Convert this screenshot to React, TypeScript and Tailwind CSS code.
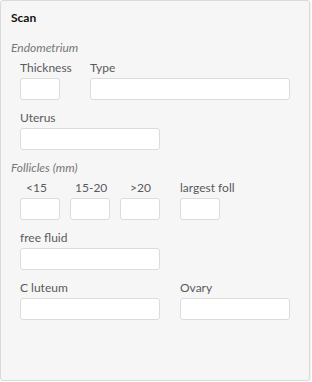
const font = { fontFamily: "Lato, 'Open Sans', sans-serif" };

function Field({ label, w, indent = "" }: { label: string; w: string; indent?: string }) {
  return (
    <div className={`flex shrink-0 flex-col ${w}`}>
      <span className={`h-4 text-[12px] leading-4 text-[#5a5a5a] whitespace-nowrap ${indent}`}>{label}</span>
      <div className="mt-[2px] h-[22px] w-full rounded-[3px] border border-[#dcdcdc] bg-white" />
    </div>
  );
}

export default function App() {
  return (
    <div className="bg-white p-0" style={font}>
      <div className="h-[381px] w-[310px] rounded-[3px] border border-[#dadada] bg-[#f6f6f6] px-[10px] pt-[9px] shadow-[1px_1px_1px_rgba(0,0,0,0.06)]">
        <h2 className="h-4 text-[12px] font-bold leading-4 text-[#111]">Scan</h2>

        <p className="mt-[14px] h-4 text-[12px] italic leading-4 text-[#777]">Endometrium</p>
        <div className="ml-[9px] mt-1 flex gap-[30px]">
          <Field label="Thickness" w="w-[40px]" />
          <Field label="Type" w="w-[200px]" />
        </div>
        <div className="ml-[9px] mt-[10px] flex">
          <Field label="Uterus" w="w-[140px]" />
        </div>

        <p className="mt-[10px] h-4 text-[12px] italic leading-4 text-[#777]">Follicles (mm)</p>
        <div className="ml-[9px] mt-1 flex gap-[10px]">
          <Field label="<15" w="w-[40px]" indent="pl-[6px]" />
          <Field label="15-20" w="w-[40px]" indent="pl-[5px]" />
          <Field label=">20" w="w-[40px]" indent="pl-[10px]" />
          <div className="ml-[10px]">
            <Field label="largest foll" w="w-[40px]" />
          </div>
        </div>
        <div className="ml-[9px] mt-[10px] flex">
          <Field label="free fluid" w="w-[140px]" />
        </div>
        <div className="ml-[9px] mt-[10px] flex gap-[20px]">
          <Field label="C luteum" w="w-[140px]" />
          <Field label="Ovary" w="w-[110px]" />
        </div>
      </div>
    </div>
  );
}
